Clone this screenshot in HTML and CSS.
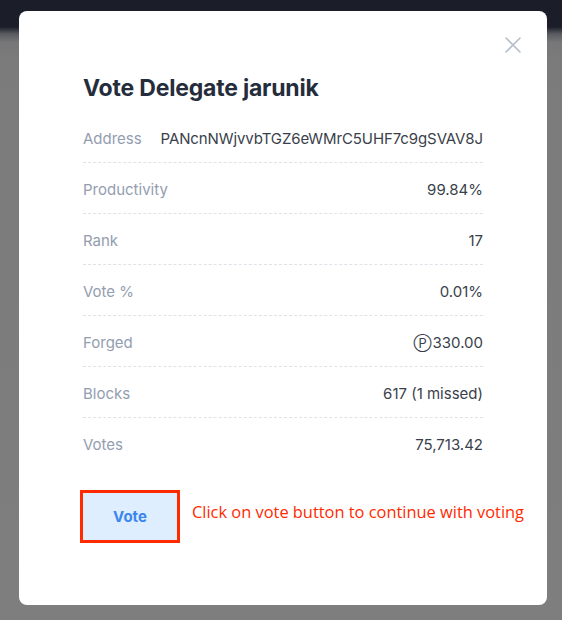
FILE: index.html
```html
<!DOCTYPE html>
<html>
<head>
<meta charset="utf-8">
<link rel="stylesheet" href="styles.css">
</head>
<body>
<div class="backdrop">
  <div class="modal">
    <button class="close" aria-label="Close">
      <svg width="16" height="16" viewBox="0 0 16 16"><path d="M1 1L15 15M15 1L1 15" stroke="#b4bfcb" stroke-width="1.6" fill="none" stroke-linecap="round"/></svg>
    </button>
    <h1 class="title">Vote Delegate jarunik</h1>
    <div class="rows">
      <div class="row"><span class="label">Address</span><span class="value addr">PANcnNWjvvbTGZ6eWMrC5UHF7c9gSVAV8J</span></div>
      <div class="row"><span class="label">Productivity</span><span class="value">99.84%</span></div>
      <div class="row"><span class="label">Rank</span><span class="value">17</span></div>
      <div class="row"><span class="label">Vote %</span><span class="value">0.01%</span></div>
      <div class="row"><span class="label">Forged</span><span class="value"><span class="coin">Ⓟ</span>330.00</span></div>
      <div class="row"><span class="label">Blocks</span><span class="value">617 (1 missed)</span></div>
      <div class="row"><span class="label">Votes</span><span class="value">75,713.42</span></div>
    </div>
    <div class="actions">
      <div class="highlight"><button class="vote">Vote</button></div>
      <span class="note">Click on vote button to continue with voting</span>
    </div>
  </div>
</div>
</body>
</html>
```
FILE: styles.css
```css
* { box-sizing: border-box; }
html, body { margin: 0; padding: 0; }
body {
  width: 562px;
  height: 620px;
  overflow: hidden;
  background: linear-gradient(to bottom, #1b1e29 0px, #1b1e29 27px, #5a5b60 34px, #777779 42px, #7b7b7b 60px, #7e7e7e 100%);
  font-family: "Inter", "Liberation Sans", sans-serif;
}
.backdrop {
  padding: 11px 15px 0 19px;
}
.modal {
  position: relative;
  width: 528px;
  height: 594px;
  background: #fff;
  border-radius: 8px;
  padding: 63px 64px 0 64px;
}
.close {
  position: absolute;
  top: 26px;
  right: 26px;
  border: 0;
  background: none;
  padding: 0;
  width: 16px;
  height: 16px;
  display: flex;
}
.title {
  margin: 0 0 10px 0;
  font-size: 23px;
  line-height: 28px;
  font-weight: 700;
  color: #252d3c;
  letter-spacing: -0.2px;
}
.rows { display: flex; flex-direction: column; }
.row {
  height: 51px;
  display: flex;
  align-items: center;
  justify-content: space-between;
  border-bottom: 1px dashed #dfe3e9;
  font-size: 15px;
  padding-top: 2px;
}
.row:last-child { border-bottom: 0; }
.label { color: #939db0; }
.value { color: #3a3f4b; }
.addr { letter-spacing: -0.1px; }
.coin { font-size: 13px; margin-right: 1px; }
.actions {
  margin-top: 21px;
  margin-left: -3px;
  display: flex;
  align-items: center;
  gap: 12px;
}
.highlight {
  flex: 0 0 auto;
  border: 3px solid #ff2a00;
  width: 100px;
  height: 53px;
  display: flex;
}
.vote {
  flex: 1;
  border: 0;
  background: #deeefe;
  color: #3a86ee;
  font-family: "Inter", "Liberation Sans", sans-serif;
  font-weight: 700;
  font-size: 15px;
  padding: 0;
}
.note {
  color: #ff2a00;
  font-family: "Open Sans", "Liberation Sans", sans-serif;
  font-size: 16.4px;
  white-space: nowrap;
  margin-top: -10px;
}
```
